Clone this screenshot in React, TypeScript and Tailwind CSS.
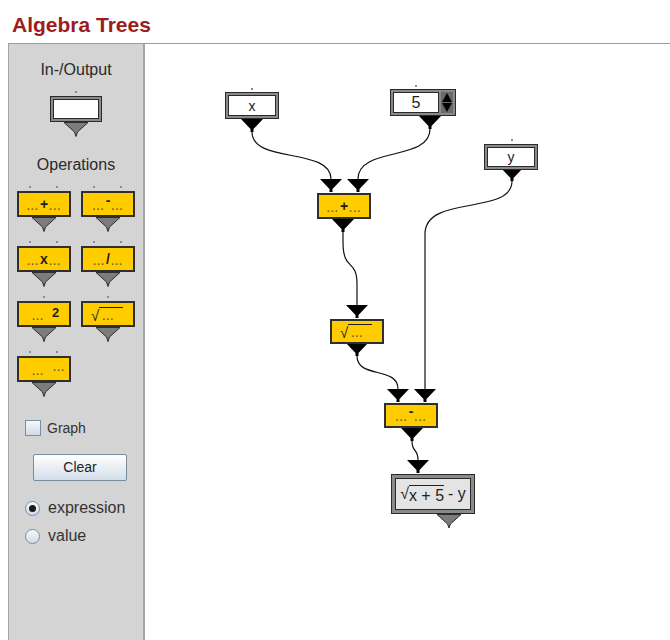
import React from "react";

// funnel shaped connector drawn under / over a node
function tri(cx: number, ty: number) {
  return `M${cx - 11} ${ty} H${cx + 11} L${cx + 1.5} ${ty + 10} V${ty + 13} H${cx - 1.5} V${ty + 10} Z`;
}

const BLACK_TRIS: [number, number][] = [
  [107, 75],
  [285, 72],
  [367, 124],
  [186, 135],
  [213, 135],
  [198, 175],
  [212, 261],
  [212, 299],
  [253, 345],
  [280, 345],
  [267, 384],
  [273, 416],
];

const WIRES = [
  "M107 88 C107 120, 186 103, 186 135",
  "M285 85 C285 118, 213 102, 213 135",
  "M367 137 C367 172, 280 150, 280 190 V345",
  "M198 188 V198 C198 228, 212 214, 212 240 V261",
  "M212 312 C212 335, 253 322, 253 345",
  "M267 397 C267 409, 273 404, 273 416",
];

function PaletteTri() {
  return (
    <svg width="26" height="15" viewBox="0 0 26 15" className="mx-auto block">
      <path d="M1 0.5 H25 L14.5 10 L13 14.5 L11.5 10 Z" fill="#7c7c7c" stroke="#2e2e2e" strokeWidth="1" />
    </svg>
  );
}

// placeholder for an empty operand
function Ph() {
  return <span className="text-[11px] font-bold leading-none tracking-[1px] text-[#7a6426]">...</span>;
}

function PaletteOp({ single, children }: { single?: boolean; children: React.ReactNode }) {
  return (
    <div className="flex flex-col">
      <div className="relative h-[6px]">
        {single ? (
          <span className="absolute left-[26px] top-[1px] h-[2px] w-[2px] bg-[#8c8c8c]" />
        ) : (
          <>
            <span className="absolute left-[12px] top-[1px] h-[2px] w-[2px] bg-[#8c8c8c]" />
            <span className="absolute left-[39px] top-[1px] h-[2px] w-[2px] bg-[#8c8c8c]" />
          </>
        )}
      </div>
      <div className="relative h-[26px] border-2 border-[#2f2f2f] bg-[#ffcc00] text-[#1f1f1f]">{children}</div>
      <PaletteTri />
    </div>
  );
}

function Infix({ op, raised }: { op: string; raised?: boolean }) {
  return (
    <div className="flex h-full items-end justify-center gap-[1px] pb-[3px]">
      <Ph />
      <span className={raised ? "mb-[5px] text-[14px] font-bold leading-none" : "mb-[1px] text-[14px] font-bold leading-none"}>{op}</span>
      <Ph />
    </div>
  );
}

function Radical() {
  return (
    <div className="flex h-full items-end pb-[2px] pl-[8px]">
      <span className="text-[15px] leading-none">√</span>
      <span className="mb-[1px] flex h-[15px] w-[24px] items-end border-t border-[#1f1f1f] pl-[3px]">
        <Ph />
      </span>
    </div>
  );
}

export default function App() {
  return (
    <div className="h-[640px] w-[670px] overflow-hidden bg-white font-['Liberation_Sans',Arial,sans-serif] text-[#222]">
      {/* title */}
      <div className="h-[43px] pl-[12px] pt-[13px]">
        <h1 className="text-[21px] font-bold leading-[24px] text-[#9c1c1c]">Algebra Trees</h1>
      </div>

      <div className="ml-[8px] flex h-[597px] border-t border-[#9e9e9e]">
        {/* palette */}
        <div className="flex w-[137px] flex-col border-l border-r-2 border-[#a4a4a4] bg-[#d4d4d4]">
          <div className="mt-[17px] text-center text-[16px] leading-[18px] text-[#2a2a2a]">In-/Output</div>
          <div className="mt-[10px] flex flex-col items-center">
            <div className="relative h-[7px] w-[52px]">
              <span className="absolute left-[25px] top-[2px] h-[2px] w-[2px] bg-[#8c8c8c]" />
            </div>
            <div className="h-[26px] w-[52px] border border-[#2a2a2a] bg-[#8a8a8a] p-[2px]">
              <div className="h-full border border-[#2a2a2a] bg-white" />
            </div>
            <PaletteTri />
          </div>

          <div className="mt-[19px] text-center text-[16px] leading-[18px] text-[#2a2a2a]">Operations</div>
          <div className="mt-[11px] grid grid-cols-[54px_54px] justify-center gap-x-[10px] gap-y-[8px]">
            <PaletteOp>
              <Infix op="+" />
            </PaletteOp>
            <PaletteOp>
              <Infix op="-" raised />
            </PaletteOp>
            <PaletteOp>
              <Infix op="x" />
            </PaletteOp>
            <PaletteOp>
              <Infix op="/" />
            </PaletteOp>
            <PaletteOp single>
              <span className="absolute bottom-[3px] left-[13px] flex">
                <Ph />
              </span>
              <span className="absolute left-[33px] top-[3px] text-[13px] font-bold leading-none">2</span>
            </PaletteOp>
            <PaletteOp single>
              <Radical />
            </PaletteOp>
            <PaletteOp>
              <span className="absolute bottom-[3px] left-[13px] flex">
                <Ph />
              </span>
              <span className="absolute left-[34px] top-[4px] flex">
                <Ph />
              </span>
            </PaletteOp>
          </div>

          {/* controls */}
          <label className="ml-[16px] mt-[23px] flex items-center gap-[6px]">
            <span className="h-[16px] w-[16px] border border-[#7b8fa3] bg-gradient-to-b from-[#f6f9fc] to-[#cfdbe8]" />
            <span className="text-[14px] leading-[16px] text-[#333]">Graph</span>
          </label>
          <button className="ml-[24px] mt-[18px] h-[27px] w-[94px] rounded-[2px] border border-[#7a8b9c] bg-gradient-to-b from-white to-[#d3deea] text-[14px] text-[#222]">
            Clear
          </button>
          <div className="ml-[16px] mt-[19px] flex flex-col gap-[12px]">
            <div className="flex items-center gap-[8px]">
              <span className="flex h-[15px] w-[15px] items-center justify-center rounded-full border border-[#7b8fa3] bg-gradient-to-b from-[#f6f9fc] to-[#cfdbe8]">
                <span className="h-[7px] w-[7px] rounded-full bg-[#1a1a1a]" />
              </span>
              <span className="text-[16px] leading-[16px] text-[#333]">expression</span>
            </div>
            <div className="flex items-center gap-[8px]">
              <span className="h-[15px] w-[15px] rounded-full border border-[#7b8fa3] bg-gradient-to-b from-[#f6f9fc] to-[#cfdbe8]" />
              <span className="text-[16px] leading-[16px] text-[#333]">value</span>
            </div>
          </div>
        </div>

        {/* canvas */}
        <div className="relative flex-1 bg-white">
          <svg className="absolute inset-0" width="525" height="596">
            {WIRES.map((d, i) => (
              <path key={i} d={d} fill="none" stroke="#111" strokeWidth="1.2" />
            ))}
            {BLACK_TRIS.map(([cx, ty], i) => (
              <path key={i} d={tri(cx, ty)} fill="#000" />
            ))}
            <path d="M292 470.5 H316 L305.5 480 L304 484 L302.5 480 Z" fill="#7c7c7c" stroke="#2e2e2e" strokeWidth="1" />
            <rect x="106" y="44" width="2" height="2" fill="#8c8c8c" />
            <rect x="270" y="41" width="2" height="2" fill="#8c8c8c" />
            <rect x="366" y="95" width="2" height="2" fill="#8c8c8c" />
          </svg>

          {/* x */}
          <div className="absolute left-[80px] top-[48px] h-[27px] w-[54px] border border-[#2a2a2a] bg-[#8a8a8a] p-[2px]">
            <div className="flex h-full items-center justify-center border border-[#2a2a2a] bg-white text-[14px] leading-none">x</div>
          </div>

          {/* 5 with spinner */}
          <div className="absolute left-[245px] top-[45px] flex h-[27px] w-[66px] gap-[2px] border border-[#2a2a2a] bg-[#8a8a8a] p-[2px]">
            <div className="flex h-full flex-1 items-center justify-center border border-[#2a2a2a] bg-white text-[16px] leading-none">5</div>
            <div className="flex w-[12px] flex-col items-center justify-center gap-[1px] bg-[#6a6a6a]">
              <span className="h-0 w-0 border-x-[5px] border-b-[9px] border-x-transparent border-b-black" />
              <span className="h-0 w-0 border-x-[5px] border-t-[9px] border-x-transparent border-t-black" />
            </div>
          </div>

          {/* y */}
          <div className="absolute left-[339px] top-[100px] h-[26px] w-[54px] border border-[#2a2a2a] bg-[#8a8a8a] p-[2px]">
            <div className="flex h-full items-center justify-center border border-[#2a2a2a] bg-white text-[14px] leading-none">y</div>
          </div>

          {/* + */}
          <div className="absolute left-[172px] top-[149px] h-[26px] w-[54px] border-2 border-[#2f2f2f] bg-[#ffcc00] text-[#1f1f1f]">
            <Infix op="+" />
          </div>

          {/* sqrt */}
          <div className="absolute left-[185px] top-[275px] h-[25px] w-[54px] border-2 border-[#2f2f2f] bg-[#ffcc00] text-[#1f1f1f]">
            <Radical />
          </div>

          {/* - */}
          <div className="absolute left-[239px] top-[359px] h-[25px] w-[54px] border-2 border-[#2f2f2f] bg-[#ffcc00] text-[#1f1f1f]">
            <Infix op="-" raised />
          </div>

          {/* result */}
          <div className="absolute left-[246px] top-[430px] h-[40px] w-[84px] border border-[#2a2a2a] bg-[#8a8a8a] p-[3px]">
            <div className="flex h-full items-center justify-center border border-[#2a2a2a] bg-[#e4e4e4] text-[16px] leading-none text-[#222]">
              <span>√</span>
              <span className="border-t border-[#222] pt-[2px]">x + 5</span>
              <span className="ml-[4px]">- y</span>
            </div>
          </div>
        </div>
      </div>
    </div>
  );
}
